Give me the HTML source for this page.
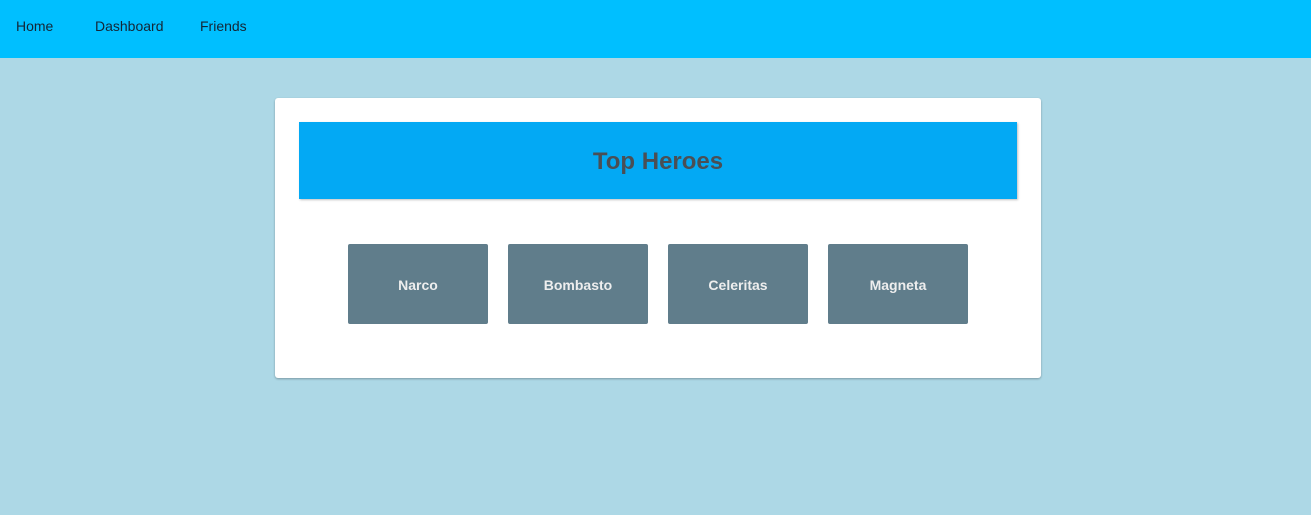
<!DOCTYPE html>
<html><head><style>
body{margin:0;width:1311px;height:515px;background:#add8e6;font-family:"Liberation Sans",sans-serif;overflow:hidden;position:relative}
.nav{position:absolute;left:0;top:0;width:1311px;height:58px;background:#00bfff}
.nav span{position:absolute;top:18px;font-size:14px;color:#142636}
.card{position:absolute;left:275px;top:98px;width:766px;height:280px;background:#fff;border-radius:3px;box-shadow:0 1px 2px rgba(0,0,0,.3)}
.hdr{position:absolute;left:24px;top:24px;width:718px;height:77px;background:#03a9f4;box-shadow:1px 1px 2px rgba(0,0,0,.25);text-align:center;line-height:79px;font-size:24px;font-weight:bold;color:#4a4f55}
.t{position:absolute;top:146px;width:140px;height:80px;background:#607d8b;border-radius:2px;color:#eee;font-weight:bold;font-size:14px;text-align:center;line-height:82px}
</style></head><body>
<div class="nav"><span style="left:16px">Home</span><span style="left:95px">Dashboard</span><span style="left:200px">Friends</span></div>
<div class="card"><div class="hdr">Top Heroes</div>
<div class="t" style="left:73px">Narco</div>
<div class="t" style="left:233px">Bombasto</div>
<div class="t" style="left:393px">Celeritas</div>
<div class="t" style="left:553px">Magneta</div>
</div>
</body></html>
